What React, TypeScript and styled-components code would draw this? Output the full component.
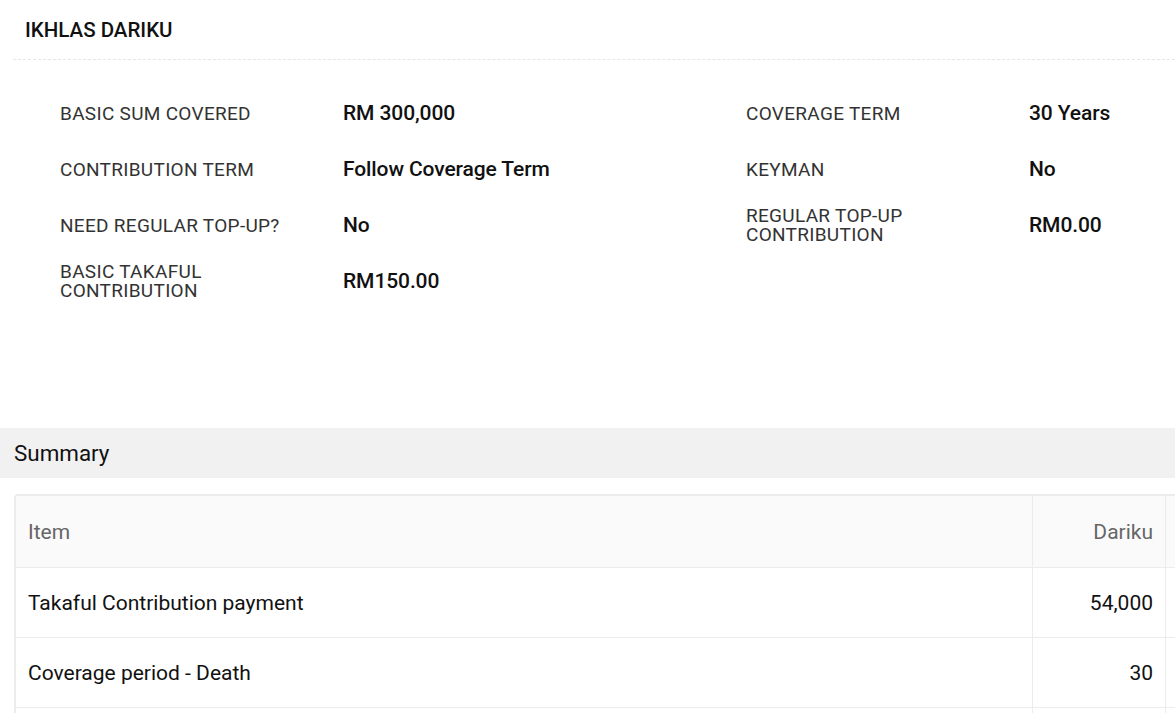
import styled, { createGlobalStyle } from "styled-components";

const details = [
  [
    { label: "BASIC SUM COVERED", value: "RM 300,000" },
    { label: "COVERAGE TERM", value: "30 Years" },
  ],
  [
    { label: "CONTRIBUTION TERM", value: "Follow Coverage Term" },
    { label: "KEYMAN", value: "No" },
  ],
  [
    { label: "NEED REGULAR TOP-UP?", value: "No" },
    { label: "REGULAR TOP-UP CONTRIBUTION", value: "RM0.00" },
  ],
  [{ label: "BASIC TAKAFUL CONTRIBUTION", value: "RM150.00" }],
];

const summary = [
  { item: "Takaful Contribution payment", value: "54,000" },
  { item: "Coverage period - Death", value: "30" },
  { item: "", value: "" },
];

function App() {
  return (
    <Page>
      <GlobalStyle />
      <Header>
        <Title>IKHLAS DARIKU</Title>
      </Header>
      <Details>
        {details.map((row, i) => (
          <DetailRow key={i}>
            {row.map((d) => (
              <Pair key={d.label}>
                <Label>{d.label}</Label>
                <Value>{d.value}</Value>
              </Pair>
            ))}
          </DetailRow>
        ))}
      </Details>
      <SectionBar>Summary</SectionBar>
      <TableWrap>
        <Table>
          <thead>
            <tr>
              <HeadCell>Item</HeadCell>
              <HeadCell $right>Dariku</HeadCell>
              <HeadCell $right></HeadCell>
            </tr>
          </thead>
          <tbody>
            {summary.map((r, i) => (
              <tr key={i}>
                <Cell>{r.item}</Cell>
                <Cell $right>{r.value}</Cell>
                <Cell $right></Cell>
              </tr>
            ))}
          </tbody>
        </Table>
      </TableWrap>
    </Page>
  );
}
export default App;

const GlobalStyle = createGlobalStyle`
  body {
    margin: 0;
    background: #fff;
    font-family: Roboto, "Liberation Sans", sans-serif;
    overflow: hidden;
  }
`;

const Page = styled.div`
  width: 1175px;
  height: 713px;
  overflow: hidden;
`;

const Header = styled.div`
  margin-left: 13px;
  height: 59px;
  display: flex;
  align-items: center;
  padding-left: 12px;
  border-bottom: 1px dashed #e6e6e6;
`;

const Title = styled.h1`
  margin: 0;
  font-size: 20.5px;
  font-weight: 500;
  color: #111;
`;

const Details = styled.div`
  padding: 25px 0 0 60px;
  margin-bottom: 119px;
`;

const DetailRow = styled.div`
  display: grid;
  grid-template-columns: 686px 1fr;
  min-height: 56px;
  align-items: center;
`;

const Pair = styled.div`
  display: grid;
  grid-template-columns: 283px 1fr;
  align-items: center;
`;

const Label = styled.div`
  font-size: 19px;
  line-height: 19px;
  letter-spacing: 0.3px;
  color: #333;
  padding-right: 28px;
`;

const Value = styled.div`
  font-size: 21px;
  font-weight: 500;
  color: #111;
  letter-spacing: -0.1px;
`;

const SectionBar = styled.div`
  height: 50px;
  display: flex;
  align-items: center;
  padding-left: 14px;
  background: #f1f1f1;
  font-size: 22.4px;
  color: #111;
`;

const TableWrap = styled.div`
  margin: 16px 0 0 14px;
  overflow: hidden;
`;

const Table = styled.table`
  width: 1300px;
  border-collapse: separate;
  border-spacing: 0;
  border: 2px solid #ececec;
  border-radius: 4px 0 0 0;
  font-size: 21px;
`;

const HeadCell = styled.th<{ $right?: boolean }>`
  height: 71px;
  padding: 0 12px 0 12px;
  background: #fafafa;
  color: #666;
  font-weight: 400;
  text-align: ${(p) => (p.$right ? "right" : "left")};
  border-bottom: 1px solid #ececec;
  border-left: 1px solid #ececec;
  &:first-child {
    border-left: none;
    width: 992px;
  }
  &:nth-child(2) {
    width: 108px;
  }
`;

const Cell = styled.td<{ $right?: boolean }>`
  height: 69px;
  padding: 0 12px;
  color: #111;
  text-align: ${(p) => (p.$right ? "right" : "left")};
  border-bottom: 1px solid #ececec;
  border-left: 1px solid #ececec;
  &:first-child {
    border-left: none;
  }
`;
